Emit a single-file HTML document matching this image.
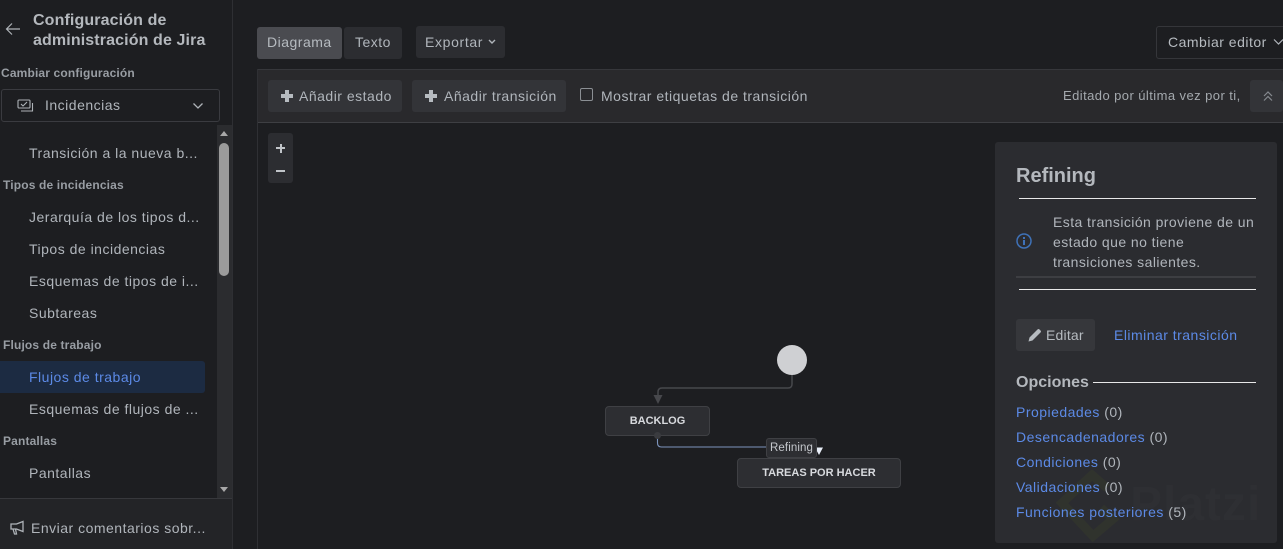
<!DOCTYPE html>
<html lang="es"><head><meta charset="utf-8"><title>Jira</title>
<style>
html,body{margin:0;padding:0;background:#1d1e21;}
#r{position:relative;width:1283px;height:549px;overflow:hidden;background:#1d1e21;font-family:"Liberation Sans",sans-serif;color:#b0b5bb;font-size:14px;}
#r div,#r span.a,#r a{position:absolute;white-space:nowrap;}
.t{line-height:20px;letter-spacing:.5px}
.h{font-weight:bold;font-size:12px;color:#989da3;line-height:16px;letter-spacing:.15px}
.btn{background:#2c2d31;border-radius:3px}
.l{color:#5c8ae6;letter-spacing:.48px;line-height:20px}
.w{background:#e8e8e8;height:1px}
</style></head><body><div id="r">

<!-- sidebar -->
<div style="left:232px;top:0;width:1px;height:549px;background:#2e2f33"></div>
<svg style="position:absolute;left:5px;top:22px" width="16" height="14" viewBox="0 0 16 14"><path d="M15 7H1.500M7 1.500L1.500 7L7 12.500" fill="none" stroke="#aeb3b8" stroke-width="1.200"/></svg>
<div style="left:33px;top:10px;font-size:16px;font-weight:bold;line-height:20px;color:#b4b8bd;letter-spacing:.12px;transform:translateY(1px)">Configuración de<br>administración de Jira</div>
<div class="h" style="left:1px;top:65px;">Cambiar configuración</div>
<div style="left:1px;top:89px;width:217px;height:31px;border:1px solid #3a3b40;border-radius:3px"></div>
<svg style="position:absolute;left:17px;top:99px" width="17" height="14" viewBox="0 0 17 14" fill="none" stroke="#aeb3b8" stroke-width="1.100"><rect x="1" y="1" width="12" height="8" rx="1"/><path d="M4 5l2 2 4-4M15.500 4v8H4"/></svg>
<div class="t" style="left:45px;top:95px;">Incidencias</div>
<svg style="position:absolute;left:192px;top:102px" width="12" height="8" viewBox="0 0 12 8"><path d="M1.500 1.500L6 6l4.500-4.500" fill="none" stroke="#aeb3b8" stroke-width="1.300"/></svg>

<!-- scrollbar -->
<div style="left:217px;top:125px;width:15px;height:373px;background:#2b2c2f"></div>
<div style="left:219px;top:143px;width:10px;height:133px;background:#9b9b9b;border-radius:5px"></div>
<div style="left:220px;top:131px;width:0;height:0;border-left:4.500px solid transparent;border-right:4.500px solid transparent;border-bottom:5px solid #a8a8a8"></div>
<div style="left:220px;top:487px;width:0;height:0;border-left:4.500px solid transparent;border-right:4.500px solid transparent;border-top:5px solid #a8a8a8"></div>

<div class="t" style="left:29px;top:143px">Transición a la nueva b...</div>
<div class="h" style="left:3px;top:177px">Tipos de incidencias</div>
<div class="t" style="left:29px;top:207px">Jerarquía de los tipos d...</div>
<div class="t" style="left:29px;top:239px">Tipos de incidencias</div>
<div class="t" style="left:29px;top:271px">Esquemas de tipos de i...</div>
<div class="t" style="left:29px;top:303px">Subtareas</div>
<div class="h" style="left:3px;top:337px">Flujos de trabajo</div>
<div style="left:0;top:361px;width:205px;height:32px;background:#1c2b42;border-radius:0 3px 3px 0"></div>
<div class="t" style="left:29px;top:367px;color:#5c8ae6">Flujos de trabajo</div>
<div class="t" style="left:29px;top:399px">Esquemas de flujos de ...</div>
<div class="h" style="left:3px;top:433px">Pantallas</div>
<div class="t" style="left:29px;top:463px">Pantallas</div>

<div style="left:0;top:498px;width:232px;height:51px;background:#232427;border-top:1px solid #37383c;box-sizing:border-box"></div>
<svg style="position:absolute;left:9px;top:520px" width="16" height="15" viewBox="0 0 16 15" fill="none" stroke="#aeb3b8" stroke-width="1.300"><path d="M14 1.500v10L7.500 9H2V4h5.500zM4 9l1.500 5h2L6.500 9"/></svg>
<div class="t" style="left:31px;top:518px">Enviar comentarios sobr...</div>

<!-- tabs -->
<div style="left:257px;top:27px;width:85px;height:32px;background:#4a4b50;border-radius:3px"></div>
<div class="t" style="left:267px;top:32px;color:#b6bbc0">Diagrama</div>
<div class="btn" style="left:344px;top:27px;width:58px;height:32px"></div>
<div class="t" style="left:355px;top:32px">Texto</div>
<div class="btn" style="left:416px;top:26px;width:89px;height:32px"></div>
<div class="t" style="left:425px;top:32px;letter-spacing:.65px">Exportar</div>
<svg style="position:absolute;left:488px;top:39px" width="8" height="6" viewBox="0 0 8 6"><path d="M1 1l3 3 3-3" fill="none" stroke="#b0b5bb" stroke-width="1.400"/></svg>
<div style="left:1156px;top:26px;width:140px;height:31px;border:1px solid #35363a;border-radius:3px"></div>
<div class="t" style="left:1168px;top:32px;color:#b6bbc0">Cambiar editor</div>
<svg style="position:absolute;left:1273px;top:38px" width="10" height="8" viewBox="0 0 10 8"><path d="M1 1.500l4.500 4.500L10 1.500" fill="none" stroke="#b0b5bb" stroke-width="1.200"/></svg>

<!-- toolbar -->
<div style="left:257px;top:69px;width:1026px;height:54px;background:#29292c;border-top:1px solid #36373b;border-bottom:1px solid #3e3f43;box-sizing:border-box"></div>
<div style="left:257px;top:69px;width:1px;height:480px;background:#2f3034"></div>
<div class="btn" style="left:268px;top:80px;width:134px;height:32px;background:#333438"></div>
<div style="left:281px;top:94px;width:12px;height:4px;background:#b6bbc0"></div><div style="left:285px;top:90px;width:4px;height:12px;background:#b6bbc0"></div>
<div class="t" style="left:299px;top:86px">Añadir estado</div>
<div class="btn" style="left:412px;top:80px;width:154px;height:32px;background:#333438"></div>
<div style="left:425px;top:94px;width:12px;height:4px;background:#b6bbc0"></div><div style="left:429px;top:90px;width:4px;height:12px;background:#b6bbc0"></div>
<div class="t" style="left:444px;top:86px">Añadir transición</div>
<div style="left:580px;top:88px;width:11px;height:11px;border:1px solid #8b8f94;border-radius:2px"></div>
<div class="t" style="left:601px;top:86px">Mostrar etiquetas de transición</div>
<div class="t" style="left:1063px;top:86px;font-size:13px;color:#a4a9ae;letter-spacing:.43px">Editado por última vez por ti,</div>
<div class="btn" style="left:1250px;top:80px;width:33px;height:32px;background:#333438"></div>
<svg style="position:absolute;left:1262px;top:90px" width="12" height="12" viewBox="0 0 12 12" fill="none" stroke="#85898e" stroke-width="1.200"><path d="M2 6l4-4 4 4M2 10.500l4-4 4 4"/></svg>

<!-- zoom -->
<div class="btn" style="left:268px;top:133px;width:25px;height:50px"></div>
<div style="left:276px;top:147px;width:9px;height:2px;background:#c0c4c8"></div><div style="left:279.500px;top:143.500px;width:2px;height:9px;background:#c0c4c8"></div>
<div style="left:276px;top:170px;width:9px;height:2px;background:#c0c4c8"></div>

<!-- diagram -->
<svg style="position:absolute;left:590px;top:335px" width="330" height="170" viewBox="0 0 330 170">
<circle cx="202" cy="25" r="15" fill="#cfd0d3"/>
<path d="M202 40v9q0 4-4 4H72q-4 0-4 4v6" fill="none" stroke="#47484c" stroke-width="1.500"/>
<path d="M63.500 60h9L68 69z" fill="#47484c"/>
<path d="M67.500 101v7q0 4 4 4H178" fill="none" stroke="#7d94bd" stroke-width="1.100"/>
<path d="M225 112.500h8l-4 7.500z" fill="#e8eef8"/>
</svg>
<div style="left:605px;top:406px;width:103px;height:28px;background:#2d2e32;border:1px solid #3f4044;border-radius:4px"></div>
<div style="left:605px;top:414px;width:105px;text-align:center;font-size:11px;font-weight:bold;color:#d8dade;line-height:14px">BACKLOG</div>
<div style="left:653.500px;top:431.500px;width:7px;height:7px;border-radius:50%;background:#3a3b3f"></div>
<div style="left:737px;top:458px;width:162px;height:28px;background:#2d2e32;border:1px solid #3f4044;border-radius:4px"></div>
<div style="left:737px;top:466px;width:164px;text-align:center;font-size:11px;font-weight:bold;color:#d8dade;line-height:14px">TAREAS POR HACER</div>
<div style="left:766px;top:438px;width:49px;height:18px;background:#2d2e32;border:1px solid #3f4044;border-radius:3px;text-align:center;font-size:11.500px;line-height:18px;color:#c4c7cc;letter-spacing:.1px">Refining</div>

<!-- panel -->
<div style="left:995px;top:142px;width:282px;height:401px;background:#2b2c30;border-radius:3px"></div>

<!-- watermark (behind panel text) -->
<svg style="position:absolute;left:1055px;top:470px;opacity:.7" width="70" height="72" viewBox="0 0 70 72"><path d="M52 18L37 5 7 33l31 33 20-17-12-11" fill="none" stroke="#33362c" stroke-width="9"/></svg>
<div style="left:1130px;top:477px;font-size:48px;font-weight:bold;line-height:56px;color:#2e2f33;letter-spacing:1px">Platzi</div>

<div style="left:1016px;top:164px;font-size:20px;font-weight:bold;line-height:24px;color:#b4b8bd">Refining</div>
<div class="w" style="left:1019px;top:198px;width:237px"></div>
<svg style="position:absolute;left:1016px;top:233px" width="16" height="16" viewBox="0 0 16 16"><circle cx="8" cy="8" r="7" fill="none" stroke="#3f72b8" stroke-width="1.500"/><rect x="7" y="7" width="2" height="5" fill="#3f72b8"/><rect x="7" y="4" width="2" height="2" fill="#3f72b8"/></svg>
<div class="t" style="left:1053px;top:212px;color:#b0b5bb;letter-spacing:.43px">Esta transición proviene de un<br>estado que no tiene<br>transiciones salientes.</div>
<div style="left:1016px;top:276px;width:240px;height:2px;background:#3d3e42"></div>
<div class="w" style="left:1019px;top:289px;width:237px"></div>
<div class="btn" style="left:1016px;top:319px;width:79px;height:32px;background:#36373b"></div>
<svg style="position:absolute;left:1028px;top:328px" width="14" height="14" viewBox="0 0 14 14"><path d="M0.500 13.500l1-4L9.500 1.500q1-1 2 0l1 1q1 1 0 2L4.500 12.500z" fill="#b6bbc0"/></svg>
<div class="t" style="left:1046px;top:325px;color:#b6bbc0;letter-spacing:.2px">Editar</div>
<div class="l" style="left:1114px;top:325px">Eliminar transición</div>
<div style="left:1016px;top:373px;font-size:16px;font-weight:bold;line-height:20px;color:#b4b8bd">Opciones</div>
<div class="w" style="left:1093px;top:382px;width:163px"></div>
<div class="l" style="left:1016px;top:402px">Propiedades <span style="color:#b0b5bb">(0)</span></div>
<div class="l" style="left:1016px;top:427px">Desencadenadores <span style="color:#b0b5bb">(0)</span></div>
<div class="l" style="left:1016px;top:452px">Condiciones <span style="color:#b0b5bb">(0)</span></div>
<div class="l" style="left:1016px;top:477px">Validaciones <span style="color:#b0b5bb">(0)</span></div>
<div class="l" style="left:1016px;top:502px">Funciones posteriores <span style="color:#b0b5bb">(5)</span></div>

</div></body></html>
